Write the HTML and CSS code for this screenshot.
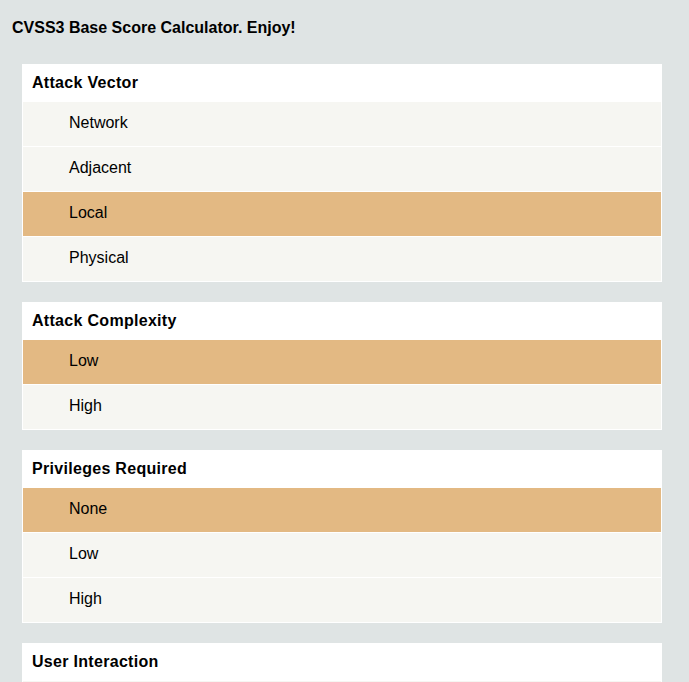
FILE: index.html
```html
<!DOCTYPE html>
<html>
<head>
<meta charset="utf-8">
<link rel="stylesheet" href="styles.css">
</head>
<body>
<h1 class="title">CVSS3 Base Score Calculator. Enjoy!</h1>
<div class="cards">
  <section class="card">
    <h2 class="card-head">Attack Vector</h2>
    <div class="opt">Network</div>
    <div class="opt">Adjacent</div>
    <div class="opt sel">Local</div>
    <div class="opt">Physical</div>
  </section>
  <section class="card">
    <h2 class="card-head">Attack Complexity</h2>
    <div class="opt sel">Low</div>
    <div class="opt">High</div>
  </section>
  <section class="card">
    <h2 class="card-head">Privileges Required</h2>
    <div class="opt sel">None</div>
    <div class="opt">Low</div>
    <div class="opt">High</div>
  </section>
  <section class="card">
    <h2 class="card-head">User Interaction</h2>
    <div class="opt">None</div>
    <div class="opt">Required</div>
  </section>
</div>
</body>
</html>
```
FILE: styles.css
```css
html, body {
  margin: 0;
  padding: 0;
  background: #dfe4e4;
  font-family: "Liberation Sans", Arial, sans-serif;
  color: #000;
}
.title {
  margin: 0;
  padding: 18px 12px 0 12px;
  height: 64px;
  box-sizing: border-box;
  font-size: 16px;
  font-weight: bold;
  line-height: 20px;
}
.cards {
  display: flex;
  flex-direction: column;
  gap: 20px;
  padding: 0 27px 20px 22px;
}
.card {
  background: #fff;
  padding: 0 1px 0 1px;
  display: flex;
  flex-direction: column;
}
.card-head {
  margin: 0;
  height: 38px;
  box-sizing: border-box;
  padding: 9px 9px 0 9px;
  font-size: 16px;
  font-weight: bold;
  line-height: 20px;
  letter-spacing: 0.3px;
}
.opt {
  height: 44px;
  box-sizing: border-box;
  margin-bottom: 1px;
  background: #f6f6f2;
  padding: 0 0 2px 46px;
  font-size: 16px;
  line-height: 42px;
}
.opt.sel {
  background: #e3b983;
}
```
